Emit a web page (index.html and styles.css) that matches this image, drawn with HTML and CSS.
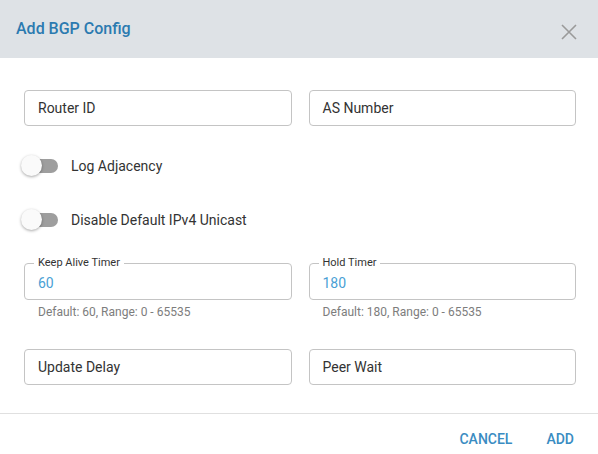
FILE: index.html
```html
<!DOCTYPE html>
<html>
<head>
<meta charset="utf-8">
<link rel="stylesheet" href="styles.css">
</head>
<body>
<div class="dialog">
  <div class="header">
    <div class="title">Add BGP Config</div>
    <button class="close" aria-label="close">
      <svg width="16" height="16" viewBox="0 0 16 16"><path d="M1 1 L15 15 M15 1 L1 15" stroke="#9a9a9a" stroke-width="1.6" fill="none"/></svg>
    </button>
  </div>
  <div class="content">
    <div class="row">
      <div class="field">Router ID</div>
      <div class="field">AS Number</div>
    </div>
    <div class="toggle-row first">
      <span class="switch"><span class="track"></span><span class="thumb"></span></span>
      <span class="toggle-label">Log Adjacency</span>
    </div>
    <div class="toggle-row second">
      <span class="switch"><span class="track"></span><span class="thumb"></span></span>
      <span class="toggle-label">Disable Default IPv4 Unicast</span>
    </div>
    <div class="row timers">
      <div class="timer">
        <div class="field outlined"><span class="legend">Keep Alive Timer</span><span class="value">60</span></div>
        <div class="helper">Default: 60, Range: 0 - 65535</div>
      </div>
      <div class="timer">
        <div class="field outlined"><span class="legend">Hold Timer</span><span class="value">180</span></div>
        <div class="helper">Default: 180, Range: 0 - 65535</div>
      </div>
    </div>
    <div class="row last">
      <div class="field">Update Delay</div>
      <div class="field">Peer Wait</div>
    </div>
  </div>
  <div class="footer">
    <button class="btn">CANCEL</button>
    <button class="btn">ADD</button>
  </div>
</div>
</body>
</html>
```
FILE: styles.css
```css
* { box-sizing: border-box; }
html, body { margin: 0; padding: 0; background: #fff; }
body { font-family: Roboto, "Noto Sans", sans-serif; color: #333; width: 598px; height: 454px; overflow: hidden; }
.dialog { width: 598px; }
.header {
  height: 58px; background: #dee2e6;
  display: flex; align-items: center; justify-content: space-between;
  padding: 0 21px 0 16px;
}
.title { font-size: 16px; font-weight: 500; color: #2b7ab0; margin-top: -1px; }
.close { border: 0; background: none; padding: 0; width: 16px; height: 16px; display: flex; margin-top: 5px; }
.content { padding: 32px 22px 0 24px; }
.row { display: grid; grid-template-columns: 1fr 1fr; column-gap: 17px; }
.field {
  height: 36px; border: 1px solid #c4c4c4; border-radius: 4px;
  padding: 0 13px; display: flex; align-items: center;
  font-size: 14px; color: #333;
}
.toggle-row { display: flex; align-items: center; height: 22px; }
.toggle-row.first { margin-top: 29px; }
.toggle-row.second { margin-top: 32px; }
.switch { position: relative; width: 38px; height: 22px; margin-left: -3px; }
.track { position: absolute; left: 6px; top: 4px; width: 31px; height: 14px; border-radius: 7px; background: #9e9e9e; }
.thumb { position: absolute; left: 0; top: 0; width: 21px; height: 21px; border-radius: 50%; background: #fafafa; box-shadow: 0 1px 3px rgba(0,0,0,0.35); }
.toggle-label { font-size: 14px; color: #333; margin-left: 12px; }
.timers { margin-top: 32px; }
.outlined { position: relative; height: 37px; border-color: #c4c4c4; }
.legend {
  position: absolute; left: 9px; top: -7px; font-size: 11px; color: #333;
  background: #fff; padding: 0 4px; line-height: 12px;
}
.value { font-size: 14px; color: #4a9fd5; margin-top: 3px; }
.helper { font-size: 12px; color: #7d7d7d; padding-left: 14px; margin-top: 5px; line-height: 14px; }
.row.last { margin-top: 30px; }
.footer {
  margin-top: 28px; border-top: 1px solid #e0e0e0;
  display: flex; justify-content: flex-end; gap: 34px;
  padding: 17px 24px 0 0;
}
.btn { border: 0; background: none; padding: 0; font-family: Roboto, sans-serif; font-size: 14px; font-weight: 500; color: #3a8cc2; letter-spacing: 0; }
```
